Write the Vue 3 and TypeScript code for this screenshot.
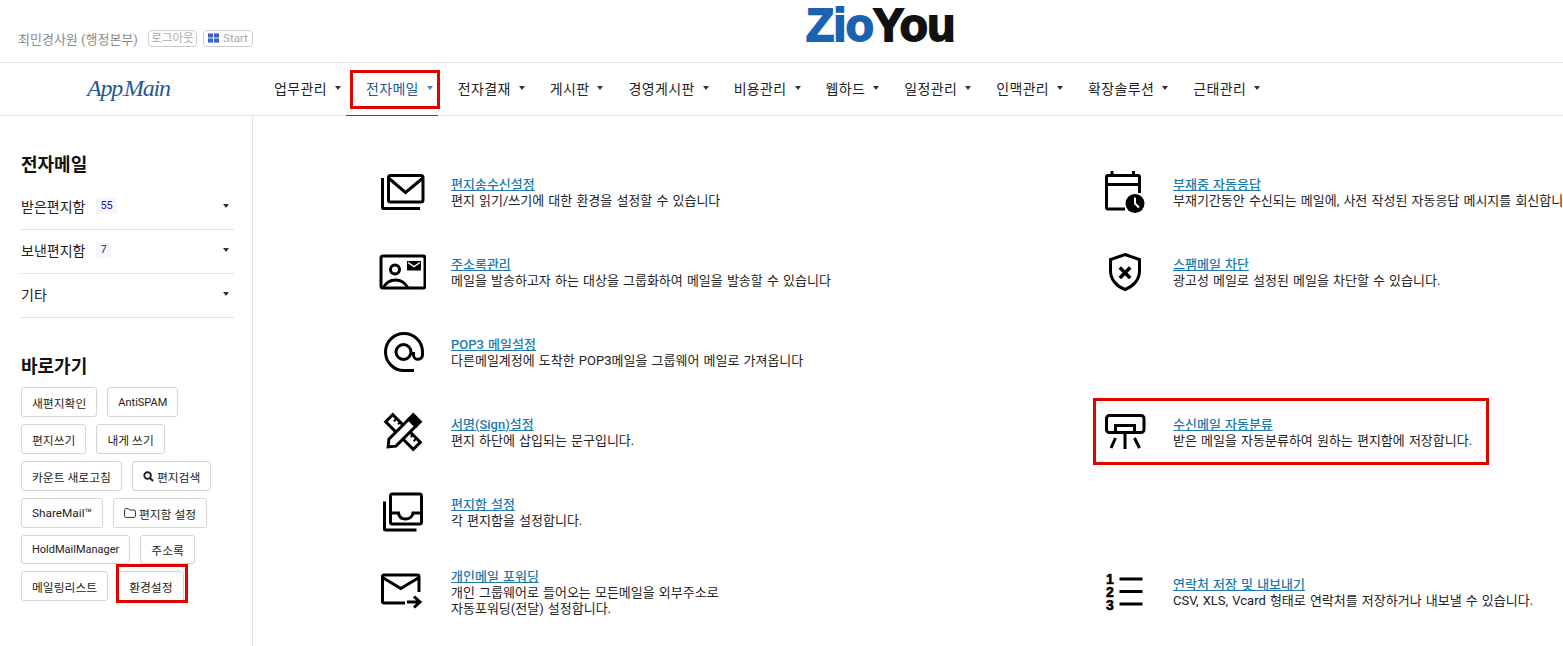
<template>
  <div class="app">
    <header class="top">
      <div class="user">
        <span class="user-name">최민경사원 (행정본부)</span>
        <a class="mini-btn logout">로그아웃</a>
        <a class="mini-btn start">
          <svg class="win" viewBox="0 0 12 10" width="11" height="10">
            <rect x="0" y="0" width="5.500" height="4.500" />
            <rect x="6.500" y="0" width="5.500" height="4.500" />
            <rect x="0" y="5.500" width="5.500" height="4.500" />
            <rect x="6.500" y="5.500" width="5.500" height="4.500" />
          </svg>
          Start
        </a>
      </div>
      <div class="brand"><span class="zio">Zio</span><span class="you">You</span></div>
    </header>

    <nav class="nav">
      <div class="nav-logo">App<small>.</small>Main</div>
      <ul class="menu">
        <li
          v-for="m in menus"
          :key="m"
          :class="{ active: m === '전자메일' }"
        >
          {{ m }}<i class="caret"></i>
        </li>
      </ul>
    </nav>

    <div class="body">
      <aside class="side">
        <h3>전자메일</h3>
        <ul class="boxes">
          <li v-for="b in boxes" :key="b.name">
            <span>{{ b.name }}</span>
            <em v-if="b.count" :class="{ unread: b.unread }">{{ b.count }}</em>
            <i class="caret"></i>
          </li>
        </ul>
        <h3 class="second">바로가기</h3>
        <div class="shortcuts">
          <a class="sbtn">새편지확인</a>
          <a class="sbtn en">AntiSPAM</a>
          <a class="sbtn">편지쓰기</a>
          <a class="sbtn">내게 쓰기</a>
          <a class="sbtn">카운트 새로고침</a>
          <a class="sbtn">
            <svg viewBox="0 0 12 12" width="11" height="11" class="ico">
              <circle cx="5" cy="5" r="3.600" fill="none" stroke="#222" stroke-width="2" />
              <path d="M7.600 7.600 11 11" stroke="#222" stroke-width="2.200" />
            </svg>
            편지검색
          </a>
          <a class="sbtn">ShareMail™</a>
          <a class="sbtn">
            <svg viewBox="0 0 12 10" width="12" height="10" class="ico">
              <path d="M.6 1.600c0-.5.4-1 1-1h2.600l1.200 1.400h5c.5 0 1 .4 1 1v5.400c0 .5-.5 1-1 1H1.600c-.6 0-1-.5-1-1z" fill="none" stroke="#333" />
            </svg>
            편지함 설정
          </a>
          <a class="sbtn en tight">HoldMailManager</a>
          <a class="sbtn tight">주소록</a>
          <a class="sbtn">메일링리스트</a>
          <a class="sbtn marked">환경설정</a>
        </div>
      </aside>

      <main class="main">
        <div
          v-for="c in cells"
          :key="c.icon"
          class="cell"
          :class="{ marked: c.marked }"
        >
          <template v-if="c.title">
            <svg class="icon" viewBox="0 0 48 48" width="48" height="48" fill="none" stroke="#000" stroke-width="3">
              <g v-if="c.icon === 'mails'">
                <rect x="10.500" y="7.500" width="34.500" height="26.500" rx="2" />
                <path d="M10.500 10 27.500 24.500 45 10" />
                <path d="M4.500 10V39.500a1 1 0 0 0 1 1H42" />
              </g>
              <g v-else-if="c.icon === 'contact'">
                <rect x="3" y="8" width="44" height="32" rx="2" />
                <circle cx="17" cy="21.500" r="4.500" />
                <path d="M5 40C8 34.500 12.500 32 17.500 32S27 34.500 30 40" />
                <rect x="29" y="13" width="14" height="9.500" fill="#000" stroke="none" />
                <path d="M30 14.500 36 18.500 42 14.500" stroke="#fff" stroke-width="1.500" />
              </g>
              <g v-else-if="c.icon === 'at'">
                <circle cx="25.500" cy="24" r="7.500" />
                <path d="M36 42.500H26A18.500 18.500 0 1 1 44.500 24V26.500A4.500 4.500 0 0 1 35.500 27V24" />
              </g>
              <g v-else-if="c.icon === 'sign'">
                <g transform="rotate(45 25 24)">
                  <rect x="5.500" y="19" width="39" height="10" fill="#fff" />
                  <path d="M11 19v4M16 19v3M21 19v4M29 19v4M34 19v3M39 19v4" stroke-width="2" />
                </g>
                <g transform="rotate(-45 25 24)">
                  <path d="M4 24 10 19H38V29H10Z" fill="#fff" />
                  <rect x="37" y="17.500" width="9" height="13" fill="#000" stroke="none" />
                </g>
              </g>
              <g v-else-if="c.icon === 'inbox'">
                <rect x="12.500" y="6" width="31" height="30" rx="2" />
                <path d="M12.500 25H20.500C21 29 24 31 27.500 31S34.500 29 35 25H43.500" />
                <path d="M6.500 13.500V41a1 1 0 0 0 1 1H38.500" />
              </g>
              <g v-else-if="c.icon === 'forward'">
                <path d="M27 35H6a1.500 1.500 0 0 1-1.500-1.500V8.500A1.500 1.500 0 0 1 6 7H39.500A1.500 1.500 0 0 1 41 8.500V24" />
                <path d="M4.500 9.500 22.800 20.500 41 9.500" />
                <path d="M29 34H42M36 28.500 42 34 36 39.500" />
              </g>
              <g v-else-if="c.icon === 'calendar'">
                <path d="M23 41H6a1.500 1.500 0 0 1-1.500-1.500V9A1.500 1.500 0 0 1 6 7.500H36A1.500 1.500 0 0 1 37.500 9V25" />
                <path d="M4.500 16.500H37.500" />
                <path d="M10 3V8M31.500 3V8" />
                <circle cx="33" cy="35.500" r="9.500" fill="#000" stroke="none" />
                <path d="M33 29.500V35.500L37 39.500" stroke="#fff" stroke-width="2" />
              </g>
              <g v-else-if="c.icon === 'shield'">
                <path d="M23 6.500 37.500 11.500V23C37.500 31.500 31.500 38.500 23 41.500 14.500 38.500 8.500 31.500 8.500 23V11.500Z" />
                <path d="M17.800 19.500 28.200 30M28.200 19.500 17.800 30" stroke-width="3.500" />
              </g>
              <g v-else-if="c.icon === 'filter'">
                <rect x="4.500" y="7.500" width="37.500" height="17" rx="3" />
                <path d="M13.500 24V17.500H32.500V24" />
                <path d="M23 24V41M13.500 30 9 40M32.500 30 37.500 40" />
              </g>
              <g v-else-if="c.icon === 'list'">
                <text x="4" y="15.500" class="num">1</text>
                <text x="4" y="28.500" class="num">2</text>
                <text x="4" y="42" class="num">3</text>
                <path d="M17.500 11H40.500M17.500 23.500H40.500M17.500 36H40.500" />
              </g>
            </svg>
            <div class="text">
              <a class="title">{{ c.title }}</a>
              <p v-for="d in c.desc" :key="d">{{ d }}</p>
            </div>
          </template>
        </div>
      </main>
    </div>
  </div>
</template>

<script setup lang="ts">
interface Box {
  name: string
  count?: string
  unread?: boolean
}

interface Cell {
  icon: string
  title?: string
  desc?: string[]
  marked?: boolean
}

const menus: string[] = [
  '업무관리', '전자메일', '전자결재', '게시판', '경영게시판', '비용관리',
  '웹하드', '일정관리', '인맥관리', '확장솔루션', '근태관리'
]

const boxes: Box[] = [
  { name: '받은편지함', count: '55', unread: true },
  { name: '보낸편지함', count: '7' },
  { name: '기타' }
]

const cells: Cell[] = [
  { icon: 'mails', title: '편지송수신설정', desc: ['편지 읽기/쓰기에 대한 환경을 설정할 수 있습니다'] },
  { icon: 'calendar', title: '부재중 자동응답', desc: ['부재기간동안 수신되는 메일에, 사전 작성된 자동응답 메시지를 회신합니다'] },
  { icon: 'contact', title: '주소록관리', desc: ['메일을 발송하고자 하는 대상을 그룹화하여 메일을 발송할 수 있습니다'] },
  { icon: 'shield', title: '스팸메일 차단', desc: ['광고성 메일로 설정된 메일을 차단할 수 있습니다.'] },
  { icon: 'at', title: 'POP3 메일설정', desc: ['다른메일계정에 도착한 POP3메일을 그룹웨어 메일로 가져옵니다'] },
  { icon: 'empty1' },
  { icon: 'sign', title: '서명(Sign)설정', desc: ['편지 하단에 삽입되는 문구입니다.'] },
  { icon: 'filter', title: '수신메일 자동분류', desc: ['받은 메일을 자동분류하여 원하는 편지함에 저장합니다.'], marked: true },
  { icon: 'inbox', title: '편지함 설정', desc: ['각 편지함을 설정합니다.'] },
  { icon: 'empty2' },
  { icon: 'forward', title: '개인메일 포워딩', desc: ['개인 그룹웨어로 들어오는 모든메일을 외부주소로', '자동포워딩(전달) 설정합니다.'] },
  { icon: 'list', title: '연락처 저장 및 내보내기', desc: ['CSV, XLS, Vcard 형태로 연락처를 저장하거나 내보낼 수 있습니다.'] }
]
</script>

<style>
html,
body {
  margin: 0;
  background: #fff;
  overflow: hidden;
}
</style>

<style scoped>
.app {
  min-height: 646px;
  display: flex;
  flex-direction: column;
  font-family: Roboto, "Noto Sans CJK KR", sans-serif;
  color: #222;
  overflow: hidden;
}

.top {
  height: 62px;
  display: flex;
  border-bottom: 1px solid #e3e3e3;
}

.user {
  width: 806px;
  box-sizing: border-box;
  padding: 30px 0 0 18px;
  display: flex;
  align-items: center;
  height: 46px;
  font-size: 13px;
  color: #8a8a8a;
}

.user-name {
  margin-right: 10px;
  width: 120px;
  white-space: nowrap;
}

.mini-btn {
  height: 15px;
  border: 1px solid #ccc;
  border-radius: 4px;
  box-sizing: content-box;
  display: flex;
  align-items: center;
  justify-content: center;
  font-size: 11.500px;
  color: #aaa;
  line-height: 14px;
}

.logout {
  width: 47px;
  margin-right: 6px;
}

.start {
  width: 48px;
  gap: 4px;
}

.win {
  fill: #3a62c4;
}

.brand {
  font-family: "Liberation Sans", sans-serif;
  font-weight: 700;
  font-size: 46px;
  line-height: 50px;
  letter-spacing: -.6px;
  -webkit-text-stroke: 2px currentColor;
  white-space: nowrap;
}

.zio {
  color: #1b62b0;
}

.you {
  color: #111;
}

.nav {
  height: 52px;
  display: flex;
  border-bottom: 1px solid #e3e3e3;
}

.nav-logo {
  width: 254px;
  box-sizing: border-box;
  padding-left: 87px;
  font-family: "Liberation Serif", serif;
  font-style: italic;
  font-size: 24px;
  letter-spacing: -1.200px;
  line-height: 50px;
  color: #1f5a96;
  white-space: nowrap;
}

.nav-logo small {
  font-size: 12px;
}

.menu {
  list-style: none;
  margin: 0;
  padding: 0;
  display: flex;
}

.menu li {
  position: relative;
  display: flex;
  align-items: center;
  height: 53px;
  box-sizing: border-box;
  padding: 0 5px 3px 20px;
  font-size: 14px;
  letter-spacing: .35px;
  color: #222;
  white-space: nowrap;
}

.menu li .caret {
  margin-left: 8px;
}

.menu li.active {
  color: #1f5a96;
  box-shadow: inset 0 -1px 0 #1f5a96;
}

.menu li.active .caret {
  border-top-color: #5a7fa8;
}

.menu li.active::after {
  content: "";
  position: absolute;
  left: 4px;
  top: 7px;
  width: 84px;
  height: 33px;
  border: 3px solid #e00000;
}

.caret {
  display: inline-block;
  width: 0;
  height: 0;
  border-left: 3.500px solid transparent;
  border-right: 3.500px solid transparent;
  border-top: 4px solid #333;
}

.body {
  flex: 1;
  display: flex;
}

.side {
  flex: none;
  padding: 36px 18px 0 21px;
  border-right: 1px solid #e3e3e3;
  box-sizing: content-box;
  width: 213px;
}

h3 {
  margin: 0;
  font-size: 18px;
  line-height: 26px;
  font-weight: 700;
  color: #111;
}

h3.second {
  margin-top: 36px;
}

.boxes {
  list-style: none;
  margin: 8px 0 0;
  padding: 0;
}

.boxes li {
  height: 44px;
  box-sizing: border-box;
  border-bottom: 1px solid #e3e3e3;
  display: flex;
  align-items: center;
  font-size: 14px;
  color: #222;
  padding: 0 5px 3px 0;
}

.boxes em {
  font-style: normal;
  font-size: 11px;
  background: #f5f6fa;
  color: #333;
  margin-left: 11px;
  padding: 1px 4px;
  line-height: 14px;
}

.boxes em.unread {
  color: #1414b4;
}

.boxes .caret {
  margin-left: auto;
}

.shortcuts {
  margin-top: 7px;
  display: flex;
  flex-wrap: wrap;
  gap: 7px 10px;
}

.sbtn {
  position: relative;
  height: 30px;
  box-sizing: border-box;
  padding: 0 10px;
  border: 1px solid #d4d4d4;
  border-radius: 3px;
  display: flex;
  align-items: center;
  gap: 3px;
  font-size: 11.800px;
  color: #222;
  white-space: nowrap;
}

.sbtn.en {
  font-size: 11px;
}

.sbtn.tight {
  height: 29px;
}

.sbtn.marked::after {
  content: "";
  position: absolute;
  left: -3px;
  top: -8px;
  width: 66px;
  height: 33px;
  border: 3px solid #e00000;
}

.main {
  flex: 1;
  min-width: 0;
  padding: 36px 0 0 125px;
  display: grid;
  grid-template-columns: 724px 1fr;
  grid-auto-rows: 80px;
  align-content: start;
  overflow: hidden;
}

.cell {
  position: relative;
  display: flex;
  align-items: center;
  gap: 23px;
  min-width: 0;
}

.cell:nth-child(odd) {
  gap: 25px;
}

.cell.marked::after {
  content: "";
  position: absolute;
  left: -9px;
  top: 6px;
  width: 390px;
  height: 61px;
  border: 3px solid #e00000;
}

.icon {
  flex: none;
}

.num {
  font-family: "Liberation Sans", sans-serif;
  font-size: 14px;
  font-weight: 700;
  fill: #000;
  stroke: #000;
  stroke-width: .6px;
}

.text {
  font-size: 13px;
  line-height: 16px;
  word-spacing: .9px;
  white-space: nowrap;
  padding-top: 2px;
}

.title {
  display: block;
  color: #1c7bac;
  font-weight: 500;
  text-decoration: underline;
}

p {
  margin: 0;
  color: #222;
}
</style>
